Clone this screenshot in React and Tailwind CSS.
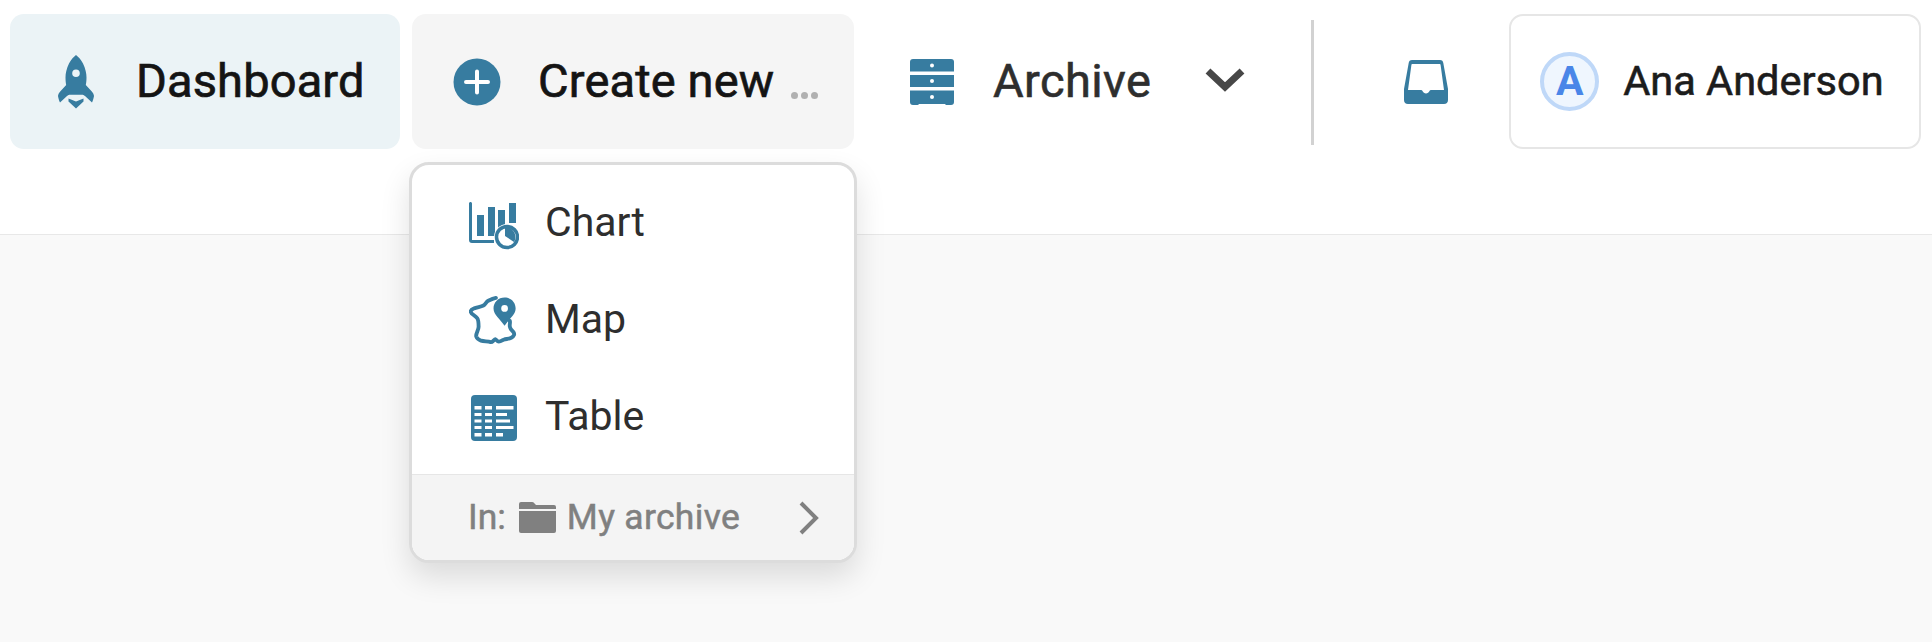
import React from "react";

const Rocket = () => (
    <svg width="38" height="54" viewBox="0 0 38 54" fill="#377ca0">
        <path fillRule="evenodd" d="M19 0c2 1.500 5 4.500 7 8.500 2.500 5 3.500 10 3.500 14 0 3-.3 5.500-.7 7.500l6 6.500c1.500 1.700 2 3 2.200 4.500-.3 2-1 4.500-2 6.500l-7-6.500c-1.200-1-2-1.300-3-1.300H13c-1 0-1.800.3-3 1.300l-7 6.500c-1-2-1.700-4.500-2-6.500.2-1.500.7-2.800 2.200-4.500l6-6.500c-.4-2-.7-4.500-.7-7.500 0-4 1-9 3.500-14C14 4.500 17 1.500 19 0zm0 14.500a3.800 3.800 0 1 0 0 7.600 3.800 3.800 0 0 0 0-7.600z" />
        <path d="M11.500 43.500l7.500 3 7.500-3v3L19 53.500l-7.500-7z" />
    </svg>
);

const PlusCircle = () => (
    <svg width="48" height="48" viewBox="0 0 48 48">
        <circle cx="24" cy="24" r="23.500" fill="#377ca0" />
        <path d="M24 13.500v21M13 24h22" stroke="#fff" strokeWidth="4" strokeLinecap="round" />
    </svg>
);

const Drawers = () => (
    <svg width="44" height="46" viewBox="0 0 44 46" fill="#377ca0">
        <path d="M3 0h38a3 3 0 0 1 3 3v9.500H0V3a3 3 0 0 1 3-3z" />
        <rect x="0" y="16" width="44" height="12" />
        <path d="M0 31.500h44V43a3 3 0 0 1-3 3h-4.500a2 2 0 0 1-1.500-1H9a2 2 0 0 1-1.500 1H3a3 3 0 0 1-3-3z" />
        <circle cx="22" cy="6.500" r="2" fill="#fff" />
        <circle cx="22" cy="22" r="2" fill="#fff" />
        <circle cx="22" cy="38" r="2" fill="#fff" />
    </svg>
);

const Inbox = () => (
    <svg width="44" height="44" viewBox="0 0 44 44" fill="#377ca0">
        <path fillRule="evenodd" d="M8 0h28c2 0 3 1 3.300 3L44 29v11c0 2.500-1.500 4-4 4H4c-2.500 0-4-1.500-4-4V29L4.700 3C5 1 6 0 8 0zm.5 4c-.7 0-1 .3-1.100 1L4 30h13c.8 0 1.200.4 1.500 1 .7 1.500 2 2.500 3.500 2.500s2.800-1 3.500-2.500c.3-.6.700-1 1.500-1h13L36.600 5c-.1-.7-.4-1-1.100-1z" />
    </svg>
);

const ChartIcon = () => (
    <svg width="50" height="48" viewBox="0 0 50 48" fill="#377ca0">
        <path d="M0 1.500C0 .7.700 0 1.500 0S3 .7 3 1.500v36.500h22v3H3a3 3 0 0 1-3-3z" />
        <rect x="8" y="13" width="7" height="21" />
        <rect x="19" y="5" width="7" height="29" />
        <rect x="29" y="8" width="7" height="19" />
        <rect x="40" y="1" width="7" height="20" />
        <circle cx="38" cy="35" r="13" fill="#fff" />
        <circle cx="38" cy="35" r="10.500" fill="#fff" stroke="#377ca0" strokeWidth="3.500" />
        <path d="M36 25v9l9 6a10 10 0 0 0-9-15z" fill="#377ca0" />
    </svg>
);

const MapIcon = () => (
    <svg width="52" height="50" viewBox="0 0 52 50" fill="none">
        <path d="M28 2c-3 .5-5 1.500-8 3-2 1-3 4-5 5-3 1.500-7 1.500-10 3-2.500 1-3.500 2.500-3 4 .5 2 4.500 3.500 6.500 6 1.500 2 1.500 5.500 1.500 9 0 3.500-3 7-2.500 10 .5 2 2.500 3.500 5 4.500 3 1 7 .5 10 1.500 2 .5 3.500-3 5-3 1.500.5 1.500 2.500 3.500 2.500 2.500 0 3.500-1.500 5-2 3-1 5-.5 8-2 3-1.500 3.500-4 2.500-5.500-1.500-2-3.500-3-4-6-.5-2 .5-4 0-6" stroke="#377ca0" strokeWidth="4" strokeLinejoin="round" strokeLinecap="round" />
        <path fillRule="evenodd" d="M37 1.500c6.500 0 11.500 5 11.500 11.500 0 6.500-7 11-11.500 18-4.500-7-11.500-11.500-11.500-18 0-6.500 5-11.500 11.500-11.500zm0 8a3.500 3.500 0 1 0 0 7 3.500 3.500 0 0 0 0-7z" fill="#377ca0" />
    </svg>
);

const TableIcon = () => (
    <svg width="46" height="46" viewBox="0 0 46 46">
        <rect width="46" height="46" rx="4" fill="#377ca0" />
        <g fill="#fff">
            <rect x="3.500" y="11" width="7" height="3.500" />
            <rect x="14" y="11" width="7" height="3.500" />
            <rect x="25" y="11" width="17.500" height="3.500" />
            <rect x="3.500" y="18" width="7" height="3" />
            <rect x="14" y="18" width="7" height="3" />
            <rect x="25" y="18" width="11" height="3" />
            <rect x="3.500" y="24.500" width="7" height="3" />
            <rect x="14" y="24.500" width="7" height="3" />
            <rect x="25" y="24.500" width="14" height="3" />
            <rect x="3.500" y="31" width="7" height="3" />
            <rect x="14" y="31" width="7" height="3" />
            <rect x="25" y="31" width="17.500" height="3" />
            <rect x="3.500" y="38" width="7" height="3.500" />
            <rect x="14" y="38" width="7" height="3.500" />
            <rect x="25" y="38" width="7" height="3.500" />
        </g>
    </svg>
);

const Folder = () => (
    <svg width="37" height="31" viewBox="0 0 37 31" fill="#808080">
        <path d="M2 0h11c1 0 1.700.4 2.300 1.200L17 3h18a2 2 0 0 1 2 2v2H0V2a2 2 0 0 1 2-2z" />
        <path d="M0 9h37v20a2 2 0 0 1-2 2H2a2 2 0 0 1-2-2z" />
    </svg>
);

const menuItems = [
    { label: "Chart", icon: <ChartIcon />, iconClass: "mt-[6px]" },
    { label: "Map", icon: <MapIcon />, iconClass: "" },
    { label: "Table", icon: <TableIcon />, iconClass: "mt-[2px]" },
];

const App = () => {
    return (
        <div className="w-[1932px] h-[642px] flex flex-col bg-[#f9f9f9] font-['Roboto',sans-serif] overflow-hidden">
            {/* Header */}
            <div className="relative h-[235px] shrink-0 bg-white border-b border-[#e8e8e8] pt-[14px] pl-[10px] flex items-start">
                <div className="w-[390px] h-[135px] rounded-[14px] bg-[#ebf3f6] flex items-center pl-[47px]">
                    <Rocket />
                    <span className="ml-[41px] text-[47px] tracking-[0.15px] text-[#141414] [-webkit-text-stroke:0.7px_#141414]">Dashboard</span>
                </div>

                <div className="ml-[12px] w-[442px] h-[135px] rounded-[14px] bg-[#f5f5f5] flex items-center pl-[41px]">
                    <PlusCircle />
                    <span className="ml-[37px] text-[47px] tracking-[0.15px] text-[#141414] [-webkit-text-stroke:0.7px_#141414]">Create new</span>
                    <div className="ml-[17px] mt-[28px] flex gap-[3px]">
                        <span className="w-[7px] h-[7px] rounded-full bg-[#b0b0b0]"></span>
                        <span className="w-[7px] h-[7px] rounded-full bg-[#b0b0b0]"></span>
                        <span className="w-[7px] h-[7px] rounded-full bg-[#b0b0b0]"></span>
                    </div>
                </div>

                <div className="ml-[56px] h-[135px] flex items-center">
                    <Drawers />
                    <span className="ml-[39px] text-[47px] tracking-[0.4px] text-[#2e2e2e] [-webkit-text-stroke:0.6px_#2e2e2e]">Archive</span>
                    <svg className="ml-[54px] mb-[5px]" width="40" height="26" viewBox="0 0 40 26" fill="none">
                        <path d="M3 5l17 16L37 5" stroke="#474747" strokeWidth="7" />
                    </svg>
                </div>

                <div className="ml-[66px] mt-[6px] w-[3px] h-[125px] bg-[#d2d2d2]"></div>

                <div className="ml-[90px] h-[135px] flex items-center">
                    <Inbox />
                </div>

                <div className="ml-[61px] w-[412px] h-[135px] rounded-[14px] border-2 border-[#e6e6e6] bg-white flex items-center pl-[29px]">
                    <div className="w-[59px] h-[59px] rounded-full border-[4px] border-[#bfd8f8] bg-[#eff6fe] flex items-center justify-center text-[41px] font-bold text-[#4a86e8]">
                        A
                    </div>
                    <span className="ml-[24px] text-[41.5px] text-[#1c1c1c] [-webkit-text-stroke:0.6px_#1c1c1c]">Ana Anderson</span>
                </div>

                {/* Create new dropdown */}
                <div className="absolute left-[409px] top-[162px] w-[448px] h-[401px] rounded-[20px] border-[3px] border-[#dcdcdc] bg-white flex flex-col overflow-hidden shadow-[0_14px_30px_rgba(0,0,0,0.12)] z-10">
                    <div className="pt-[9px] flex flex-col flex-1">
                        {menuItems.map((item) => (
                            <div key={item.label} className="h-[97px] flex items-center">
                                <div className={`ml-[57px] w-[50px] flex justify-center shrink-0 ${item.iconClass}`}>{item.icon}</div>
                                <span className="ml-[26px] text-[41px] text-[#2e2e2e]">{item.label}</span>
                            </div>
                        ))}
                    </div>
                    <div className="h-[86px] border-t border-[#e6e6e6] bg-[#f4f4f4] flex items-center pl-[56px] text-[35.5px] text-[#808080] [-webkit-text-stroke:0.5px_#808080]">
                        <span>In:</span>
                        <span className="ml-[13px] flex"><Folder /></span>
                        <span className="ml-[11px] tracking-[0.3px]">My archive</span>
                        <svg className="ml-auto mr-[34px]" width="22" height="36" viewBox="0 0 22 36" fill="none">
                            <path d="M3 3l15 15L3 33" stroke="#808080" strokeWidth="4" />
                        </svg>
                    </div>
                </div>
            </div>

            {/* Page body */}
            <div className="flex-1 bg-[#f9f9f9]"></div>
        </div>
    );
};

export default App;
